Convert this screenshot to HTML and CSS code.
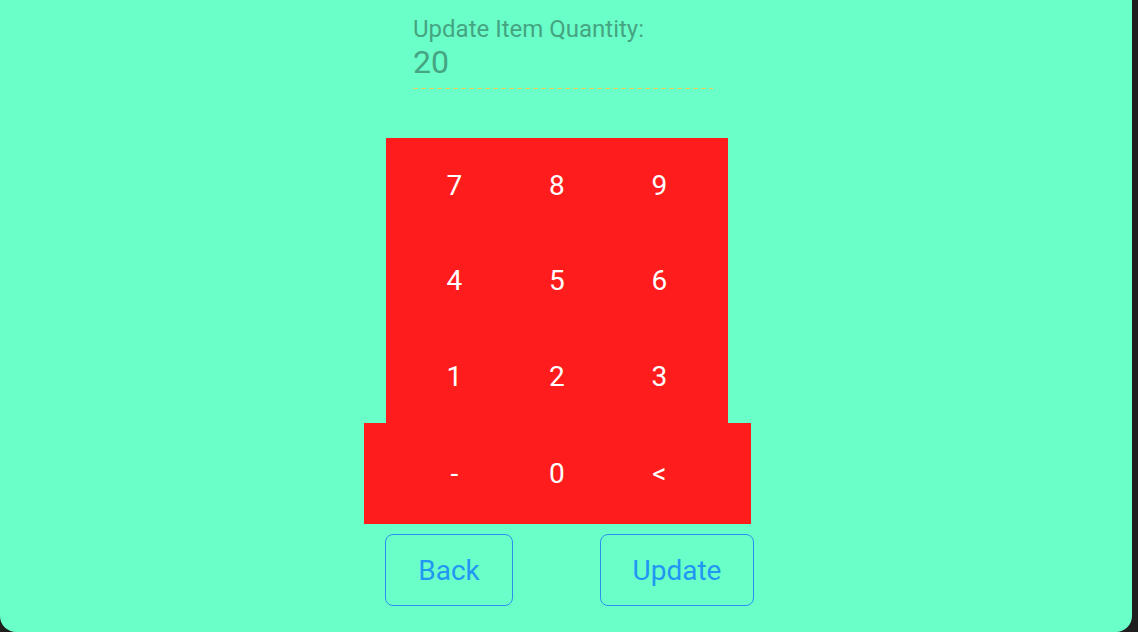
FILE: index.html
```html
<!DOCTYPE html>
<html>
<head>
<meta charset="utf-8">
<link rel="stylesheet" href="styles.css">
</head>
<body>
<div class="panel">
  <div class="content">
    <div class="field">
      <div class="field-label">Update Item Quantity:</div>
      <div class="field-value">20</div>
    </div>
    <div class="keypad">
      <div class="keys">
        <div class="key">7</div><div class="key">8</div><div class="key">9</div>
        <div class="key">4</div><div class="key">5</div><div class="key">6</div>
        <div class="key">1</div><div class="key">2</div><div class="key">3</div>
      </div>
      <div class="keys bottom">
        <div class="key">-</div><div class="key">0</div><div class="key">&lt;</div>
      </div>
    </div>
    <div class="actions">
      <button class="btn back">Back</button>
      <button class="btn update">Update</button>
    </div>
  </div>
</div>
</body>
</html>
```
FILE: styles.css
```css
html, body {
  margin: 0;
  padding: 0;
  width: 1138px;
  height: 632px;
  overflow: hidden;
  background: #1e1e1e;
  font-family: Roboto, "Liberation Sans", sans-serif;
}
.panel {
  width: 1132px;
  height: 632px;
  background: #6affc8;
  border-radius: 0 0 16px 16px;
}
.content {
  display: flex;
  flex-direction: column;
  align-items: flex-start;
  margin-left: 364px;
  width: 390px;
}
.field {
  margin-left: 49px;
  width: 300px;
  padding-top: 15px;
  height: 89px;
  box-sizing: border-box;
  background-image: repeating-linear-gradient(to right, #dcd25e 0, #dcd25e 5px, transparent 5px, transparent 8px);
  background-size: 100% 1px;
  background-position: left bottom;
  background-repeat: no-repeat;
}
.field-label {
  font-size: 24px;
  line-height: 28px;
  color: #45a482;
}
.field-value {
  font-size: 32px;
  line-height: 38px;
  color: #45a482;
}
.keypad {
  margin-top: 49px;
  display: flex;
  flex-direction: column;
  align-items: flex-start;
}
.keys {
  margin-left: 22px;
  width: 342px;
  background: #ff1c1c;
  display: grid;
  grid-template-columns: repeat(3, 102.5px);
  grid-template-rows: 94px 97px 94px;
  padding-left: 17px;
  box-sizing: border-box;
}
.keys.bottom {
  margin-left: 0;
  width: 387px;
  padding-left: 39px;
  grid-template-rows: 101px;
}
.key {
  display: flex;
  align-items: center;
  justify-content: center;
  color: #ffffff;
  font-size: 28px;
}
.actions {
  margin-top: 10px;
  margin-left: 21px;
  display: flex;
  gap: 87px;
}
.btn {
  height: 72px;
  background: transparent;
  border: 1px solid #2a8ff0;
  border-radius: 8px;
  color: #2196f3;
  font-family: Roboto, "Liberation Sans", sans-serif;
  font-size: 28px;
  padding: 0;
}
.back { width: 128px; }
.update { width: 154px; }
```
